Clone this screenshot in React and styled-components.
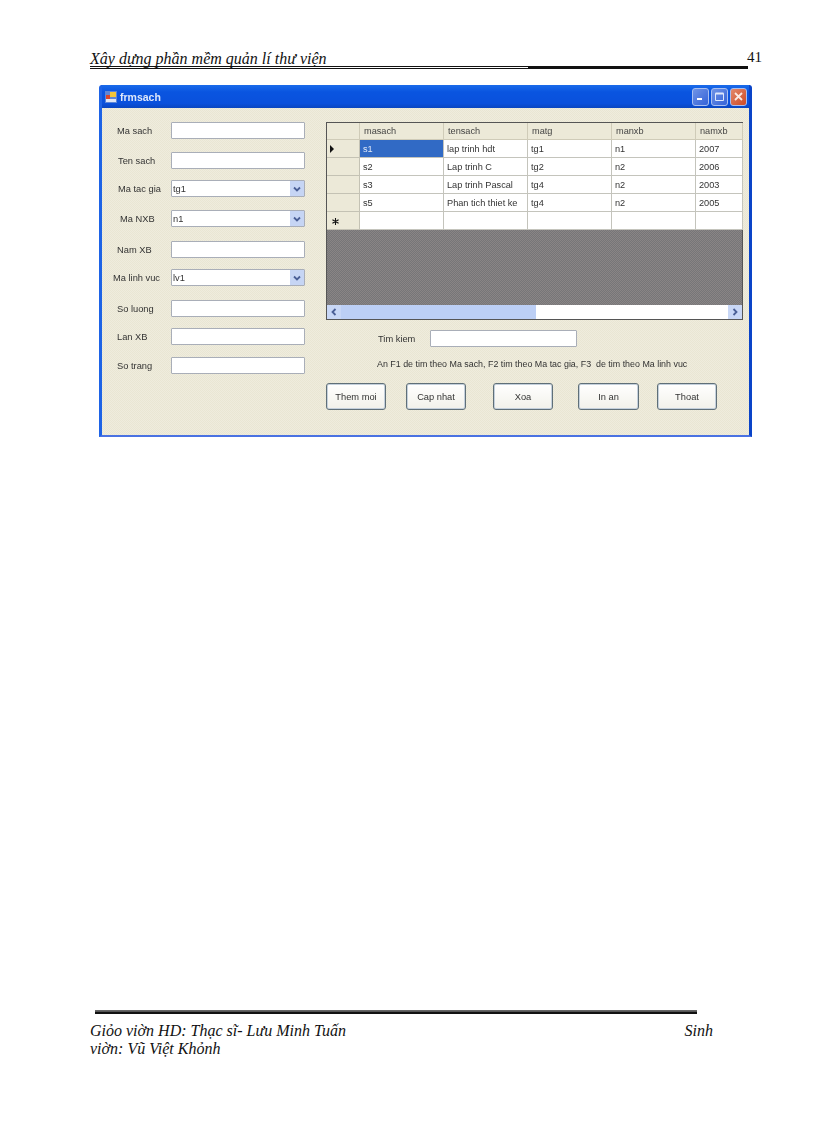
import styled, { createGlobalStyle } from "styled-components";

const GlobalStyle = createGlobalStyle`
  html, body {
    margin: 0;
    padding: 0;
    background: #fff;
  }
`;

const Page = styled.div`
  width: 816px;
  height: 1123px;
  box-sizing: border-box;
  padding: 48px 0 0 90px;
  display: flex;
  flex-direction: column;
  font-family: "Liberation Serif", serif;
  color: #111;
  overflow: hidden;
`;

const TopBar = styled.header`
  display: flex;
  align-items: flex-start;
`;

const TitleBlock = styled.div`
  width: 658px;
`;

const DocTitle = styled.div`
  font-style: italic;
  font-size: 16px;
  line-height: 21px;
  height: 18px;
`;

const RuleRow = styled.div`
  display: flex;
  height: 3px;
`;

const ThinRule = styled.div`
  width: 438px;
  border-top: 1px solid #111;
  border-bottom: 1px solid #111;
  box-sizing: border-box;
`;

const ThickRule = styled.div`
  flex: 1;
  background: #111;
`;

const PageNumber = styled.div`
  margin-left: -1px;
  font-size: 15px;
  line-height: 18px;
`;

const Window = styled.section`
  width: 653px;
  height: 352px;
  margin: 16px 0 0 9px;
  box-sizing: border-box;
  display: flex;
  flex-direction: column;
  flex-shrink: 0;
  background: #0a4fd8;
  border-left: 3px solid #1e63e6;
  border-right: 3px solid #0a44c8;
  border-bottom: 2px solid #4a72e2;
  border-radius: 3px 3px 0 0;
  filter: blur(0.35px);
`;

const TitleBar = styled.div`
  height: 23px;
  flex-shrink: 0;
  display: flex;
  align-items: center;
  padding: 0 0 0 2px;
  background: linear-gradient(180deg, #1a6bea 0%, #0a55e0 30%, #0a50dc 80%, #0a46c0 100%);
`;

const AppIcon = styled.svg`
  width: 14px;
  height: 14px;
  margin-right: 2px;
`;

const TitleText = styled.span`
  flex: 1;
  font-family: "Liberation Sans", sans-serif;
  font-weight: 700;
  font-size: 10.5px;
  color: #dfe8fb;
`;

const CaptionButton = styled.div`
  width: 17px;
  height: 18px;
  margin-right: 2px;
  box-sizing: border-box;
  border: 1px solid #a9bff0;
  border-radius: 3px;
  background: ${(p) =>
    p.$close
      ? "linear-gradient(135deg, #e2896c, #cf4a25)"
      : "linear-gradient(135deg, #6f93e6, #3563d8)"};
  display: flex;
  align-items: center;
  justify-content: center;
`;

const Body = styled.div`
  flex: 1;
  display: flex;
  background: repeating-conic-gradient(#efecde 0 25%, #e9e6d3 0 50%) 0 0 / 2px 2px;
  padding-top: 14px;
`;

const FieldColumn = styled.div`
  width: 224px;
  flex-shrink: 0;
`;

const Field = styled.div`
  display: flex;
  align-items: center;
  height: 17px;
  margin-top: ${(p) => p.$gap || 0}px;
`;

const Label = styled.label`
  width: ${(p) => 69 - p.$indent}px;
  margin-left: ${(p) => p.$indent}px;
  flex-shrink: 0;
  font-family: "Liberation Sans", sans-serif;
  font-size: 9.3px;
  color: #333;
  white-space: nowrap;
`;

const TextBox = styled.div`
  width: ${(p) => p.$width || 134}px;
  height: 17px;
  box-sizing: border-box;
  background: #fff;
  border: 1px solid #a9aeb8;
  border-radius: 1px;
`;

const ComboBox = styled(TextBox)`
  display: flex;
  align-items: center;
  justify-content: space-between;
  padding-left: 1px;
  font-family: "Liberation Sans", sans-serif;
  font-size: 9.3px;
  color: #333;
`;

const ComboArrow = styled.div`
  width: 14px;
  height: 15px;
  background: #c6d5f4;
  display: flex;
  align-items: center;
  justify-content: center;
`;

const RightColumn = styled.div`
  width: 417px;
  flex-shrink: 0;
  display: flex;
  flex-direction: column;
`;

const GridFrame = styled.div`
  height: 198px;
  box-sizing: border-box;
  display: flex;
  flex-direction: column;
  border: 1px solid #555;
  background: #808080;
  font-family: "Liberation Sans", sans-serif;
  font-size: 9.2px;
  color: #333;
`;

const Rows = styled.div`
  display: grid;
  grid-template-columns: 33px 84px 84px 84px 84px 47px;
  grid-template-rows: 17px repeat(5, 18px);
`;

const HeaderCell = styled.div`
  display: flex;
  align-items: center;
  padding-left: 4px;
  box-sizing: border-box;
  background: #ece9d8;
  border-right: 1px solid #cfcbb8;
  border-bottom: 1px solid #cfcbb8;
  color: #444;
`;

const RowHeader = styled.div`
  display: flex;
  align-items: center;
  padding-left: 3px;
  box-sizing: border-box;
  background: #ece9d8;
  border-right: 1px solid #c4c2b4;
  border-bottom: 1px solid #c4c2b4;
`;

const CurrentRow = styled.div`
  width: 0;
  height: 0;
  border-left: 4px solid #111;
  border-top: 4px solid transparent;
  border-bottom: 4px solid transparent;
`;

const NewRow = styled.svg`
  width: 7px;
  height: 7px;
  margin: 1px 0 0 2px;
`;

const Cell = styled.div`
  display: flex;
  align-items: center;
  padding-left: 3px;
  box-sizing: border-box;
  white-space: nowrap;
  background: ${(p) => (p.$selected ? "#316ac5" : "#fff")};
  color: ${(p) => (p.$selected ? "#dfe8f8" : "#333")};
  border-right: 1px solid #c4c4bc;
  border-bottom: 1px solid #c4c4bc;
`;

const EmptyArea = styled.div`
  flex: 1;
  background: repeating-conic-gradient(#8a8585 0 25%, #767678 0 50%) 0 0 / 2px 2px;
`;

const ScrollBar = styled.div`
  height: 14px;
  flex-shrink: 0;
  display: flex;
  background: #fff;
`;

const ScrollButton = styled.div`
  width: 14px;
  background: #c8d7f6;
  display: flex;
  align-items: center;
  justify-content: center;
`;

const ScrollThumb = styled.div`
  width: 195px;
  background: #bccff5;
`;

const ScrollTrack = styled.div`
  flex: 1;
`;

const SearchRow = styled.div`
  display: flex;
  align-items: center;
  height: 17px;
  margin-top: 10px;
  padding-left: 52px;
  font-family: "Liberation Sans", sans-serif;
  font-size: 9.3px;
  color: #333;
`;

const SearchLabel = styled.label`
  width: 52px;
`;

const Hint = styled.div`
  margin: 9px 0 0 51px;
  height: 14px;
  line-height: 16px;
  font-family: "Liberation Sans", sans-serif;
  font-size: 8.9px;
  color: #333;
  white-space: pre;
`;

const ButtonRow = styled.div`
  display: flex;
  margin-top: 13px;
`;

const Button = styled.button`
  width: ${(p) => p.$width || 60}px;
  height: 27px;
  margin: 0 0 0 ${(p) => p.$gap || 0}px;
  padding: 0;
  box-sizing: border-box;
  background: linear-gradient(180deg, #fff, #f2f1ea);
  border: 1px solid #5f6f78;
  box-shadow: inset 0 0 0 1px #c4d0dc;
  border-radius: 3px;
  font-family: "Liberation Sans", sans-serif;
  font-size: 9.3px;
  color: #333;
`;

const Footer = styled.footer`
  margin-top: 573px;
  width: 640px;
`;

const FooterRule = styled.div`
  width: 602px;
  height: 4px;
  margin-left: 5px;
  border-top: 1px solid #666;
  border-bottom: 2px solid #111;
  background: #555;
  box-sizing: border-box;
`;

const FooterLine = styled.div`
  display: flex;
  justify-content: space-between;
  width: 623px;
  font-style: italic;
  font-size: 16px;
  line-height: 18px;
  margin-top: ${(p) => p.$gap || 0}px;
`;

const fields = [
  { label: "Ma sach", indent: 15, gap: 0 },
  { label: "Ten sach", indent: 16, gap: 13 },
  { label: "Ma tac gia", indent: 16, gap: 11, value: "tg1" },
  { label: "Ma NXB", indent: 18, gap: 13, value: "n1" },
  { label: "Nam XB", indent: 15, gap: 14 },
  { label: "Ma linh vuc", indent: 11, gap: 11, value: "lv1" },
  { label: "So luong", indent: 15, gap: 14 },
  { label: "Lan XB", indent: 15, gap: 11 },
  { label: "So trang", indent: 15, gap: 12 },
];

const columns = ["masach", "tensach", "matg", "manxb", "namxb"];

const books = [
  ["s1", "lap trinh hdt", "tg1", "n1", "2007"],
  ["s2", "Lap trinh C", "tg2", "n2", "2006"],
  ["s3", "Lap trinh Pascal", "tg4", "n2", "2003"],
  ["s5", "Phan tich thiet ke", "tg4", "n2", "2005"],
  ["", "", "", "", ""],
];

const buttons = [
  { text: "Them moi", gap: 0 },
  { text: "Cap nhat", gap: 20 },
  { text: "Xoa", gap: 27 },
  { text: "In an", gap: 25, width: 61 },
  { text: "Thoat", gap: 18 },
];

const Chevron = ({ dir }) => (
  <svg width="8" height="8" viewBox="0 0 8 8">
    <path
      d={dir === "left" ? "M5.5 1 2.5 4l3 3" : dir === "right" ? "M2.5 1l3 3-3 3" : "M1 2.5l3 3 3-3"}
      fill="none"
      stroke="#4a5f96"
      strokeWidth="1.8"
    />
  </svg>
);

const App = () => (
  <Page>
    <GlobalStyle />
    <TopBar>
      <TitleBlock>
        <DocTitle>Xây dựng phần mềm quản lí thư viện</DocTitle>
        <RuleRow>
          <ThinRule />
          <ThickRule />
        </RuleRow>
      </TitleBlock>
      <PageNumber>41</PageNumber>
    </TopBar>

    <Window>
      <TitleBar>
        <AppIcon viewBox="0 0 14 14">
          <rect x="1" y="1" width="12" height="12" fill="#5c86d8" />
          <rect x="2" y="5" width="4" height="4" fill="#d8452c" />
          <rect x="6" y="2" width="6" height="5" fill="#f3c63a" />
          <rect x="2" y="9" width="10" height="3" fill="#dfe6f5" />
        </AppIcon>
        <TitleText>frmsach</TitleText>
        <CaptionButton>
          <svg width="11" height="11" viewBox="0 0 11 11">
            <rect x="2" y="7" width="5" height="2" fill="#fff" />
          </svg>
        </CaptionButton>
        <CaptionButton>
          <svg width="11" height="11" viewBox="0 0 11 11">
            <path d="M1.5 2.5h8v7h-8z" fill="none" stroke="#dfe8fb" />
            <rect x="1.5" y="1.5" width="8" height="2" fill="#dfe8fb" />
          </svg>
        </CaptionButton>
        <CaptionButton $close>
          <svg width="11" height="11" viewBox="0 0 11 11">
            <path d="M2 2l7 7M9 2l-7 7" stroke="#fbe9e2" strokeWidth="1.8" />
          </svg>
        </CaptionButton>
      </TitleBar>

      <Body>
        <FieldColumn>
          {fields.map((f) => (
            <Field key={f.label} $gap={f.gap}>
              <Label $indent={f.indent}>{f.label}</Label>
              {f.value ? (
                <ComboBox>
                  {f.value}
                  <ComboArrow>
                    <Chevron />
                  </ComboArrow>
                </ComboBox>
              ) : (
                <TextBox />
              )}
            </Field>
          ))}
        </FieldColumn>

        <RightColumn>
          <GridFrame>
            <Rows>
              <HeaderCell />
              {columns.map((c) => (
                <HeaderCell key={c}>{c}</HeaderCell>
              ))}
              {books.map((row, i) => [
                <RowHeader key={`h${i}`}>
                  {i === 0 && <CurrentRow />}
                  {i === 4 && (
                    <NewRow viewBox="0 0 8 8">
                      <path d="M4 0v8M0.5 2l7 4M7.5 2l-7 4" stroke="#111" strokeWidth="1.2" />
                    </NewRow>
                  )}
                </RowHeader>,
                ...row.map((v, j) => (
                  <Cell key={`${i}-${j}`} $selected={i === 0 && j === 0}>
                    {v}
                  </Cell>
                )),
              ])}
            </Rows>
            <EmptyArea />
            <ScrollBar>
              <ScrollButton>
                <Chevron dir="left" />
              </ScrollButton>
              <ScrollThumb />
              <ScrollTrack />
              <ScrollButton>
                <Chevron dir="right" />
              </ScrollButton>
            </ScrollBar>
          </GridFrame>

          <SearchRow>
            <SearchLabel>Tim kiem</SearchLabel>
            <TextBox $width={147} />
          </SearchRow>
          <Hint>An F1 de tim theo Ma sach, F2 tim theo Ma tac gia, F3  de tim theo Ma linh vuc</Hint>

          <ButtonRow>
            {buttons.map((b) => (
              <Button key={b.text} $gap={b.gap} $width={b.width}>
                {b.text}
              </Button>
            ))}
          </ButtonRow>
        </RightColumn>
      </Body>
    </Window>

    <Footer>
      <FooterRule />
      <FooterLine $gap={8}>
        <span>Giỏo viờn HD: Thạc sĩ- Lưu Minh Tuấn</span>
        <span>Sinh</span>
      </FooterLine>
      <FooterLine>
        <span>viờn: Vũ Việt Khỏnh</span>
      </FooterLine>
    </Footer>
  </Page>
);

export default App;
